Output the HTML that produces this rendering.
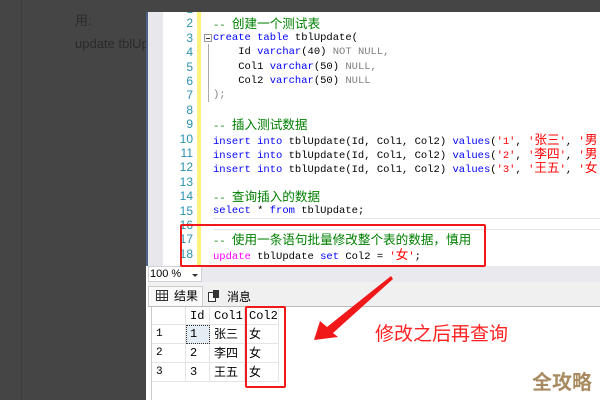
<!DOCTYPE html>
<html><head><meta charset="utf-8"><style>
*{margin:0;padding:0;box-sizing:border-box}
body{width:600px;height:400px;overflow:hidden;background:#454545;position:relative;font-family:"Liberation Mono","Noto Sans CJK SC",monospace}
.abs{position:absolute}
.code{position:absolute;left:213px;font-size:10.5px;line-height:14px;white-space:pre;color:#000}
.ln{position:absolute;left:163px;width:30px;text-align:right;font-size:12px;line-height:14px;color:#2b91af;font-family:"Liberation Sans",sans-serif}
.c{font-family:"Noto Sans CJK SC",sans-serif;font-size:12.6px;line-height:14px}
.g{color:#008000}.b{color:#0000ff}.r{color:#ff0000}.gr{color:#808080}.m{color:#ff00ff}
.cell{position:absolute;border-right:1px solid #e4e4e4;border-bottom:1px solid #e4e4e4;font-size:12px;line-height:18px;padding-left:4px;color:#000}
</style></head><body>
<div class="abs" style="left:21px;top:0;width:1px;height:400px;background:#3c3c3c"></div>
<div class="abs" style="left:75px;top:10px;color:#2a2a2a;font-size:13px;font-family:'Liberation Sans','Noto Sans CJK SC',sans-serif">用:</div>
<div class="abs" style="left:75px;top:36px;color:#2a2a2a;font-size:13px;font-family:'Liberation Sans',sans-serif">update tblUp</div>
<div class="abs" style="left:390px;top:-1px;color:#2a2a2a;font-size:10.5px;white-space:pre">Id varchar(40) NOT NULL,</div>
<div class="abs" style="left:284px;top:0;width:1px;height:12px;background:#555"></div>
<!-- screenshot panel -->
<div class="abs" style="left:146px;top:12px;width:454px;height:388px;background:#fff"></div>
<div class="abs" style="left:146px;top:12px;width:2px;height:254px;background:#4a5f8a"></div>
<div class="abs" style="left:148px;top:12px;width:15px;height:254px;background:#e8e8ec"></div>
<div class="abs" style="left:197px;top:12px;width:4px;height:254px;background:#fff27a"></div>
<div class="abs" style="left:208px;top:44px;width:1px;height:58px;background:#aaa"></div>
<div class="abs" style="left:204px;top:34px;width:8px;height:8px;border:1px solid #999;background:#fff"></div>
<div class="abs" style="left:206px;top:38px;width:4px;height:1px;background:#333"></div>
<div class="abs" style="left:213px;top:218px;width:387px;height:12px;border-top:1px solid #e4e4e8;border-bottom:1px solid #e4e4e8"></div>
<div class="ln" style="top:2px">1</div><div class="ln" style="top:16px">2</div><div class="ln" style="top:31px">3</div><div class="ln" style="top:45px">4</div><div class="ln" style="top:60px">5</div><div class="ln" style="top:74px">6</div><div class="ln" style="top:88px">7</div><div class="ln" style="top:103px">8</div><div class="ln" style="top:117px">9</div><div class="ln" style="top:132px">10</div><div class="ln" style="top:146px">11</div><div class="ln" style="top:160px">12</div><div class="ln" style="top:175px">13</div><div class="ln" style="top:189px">14</div><div class="ln" style="top:204px">15</div><div class="ln" style="top:218px">16</div><div class="ln" style="top:232px">17</div><div class="ln" style="top:247px">18</div>
<div class="abs" style="left:146px;top:0;width:454px;height:12px;background:#454545"></div>
<div class="code g" style="top:16px">-- <span class="c">创建一个测试表</span></div>
<div class="code" style="top:31px"><span class="b">create table</span> tblUpdate(</div>
<div class="code" style="top:45px">    Id <span class="b">varchar</span>(40) <span class="gr">NOT NULL,</span></div>
<div class="code" style="top:60px">    Col1 <span class="b">varchar</span>(50) <span class="gr">NULL,</span></div>
<div class="code" style="top:74px">    Col2 <span class="b">varchar</span>(50) <span class="gr">NULL</span></div>
<div class="code gr" style="top:88px">);</div>
<div class="code g" style="top:117px">-- <span class="c">插入测试数据</span></div>
<div class="code" style="top:132px"><span class="b">insert into</span> tblUpdate(Id, Col1, Col2) <span class="b">values</span>(<span class="r">'1'</span>, <span class="r">'<span class="c">张三</span>'</span>, <span class="r">'<span class="c">男</span>'</span></div>
<div class="code" style="top:146px"><span class="b">insert into</span> tblUpdate(Id, Col1, Col2) <span class="b">values</span>(<span class="r">'2'</span>, <span class="r">'<span class="c">李四</span>'</span>, <span class="r">'<span class="c">男</span>'</span></div>
<div class="code" style="top:160px"><span class="b">insert into</span> tblUpdate(Id, Col1, Col2) <span class="b">values</span>(<span class="r">'3'</span>, <span class="r">'<span class="c">王五</span>'</span>, <span class="r">'<span class="c">女</span>'</span></div>
<div class="code g" style="top:189px">-- <span class="c">查询插入的数据</span></div>
<div class="code" style="top:204px"><span class="b">select</span> * <span class="b">from</span> tblUpdate;</div>
<div class="code g" style="top:232px">-- <span class="c">使用一条语句批量修改整个表的数据，慎用</span></div>
<div class="code" style="top:247px"><span class="m">update</span> tblUpdate <span class="b">set</span> Col2 = <span class="r">'<span class="c">女</span>'</span>;</div>
<!-- zoom bar -->
<div class="abs" style="left:148px;top:266px;width:452px;height:16px;background:#e9e9ee"></div>
<div class="abs" style="left:148px;top:266px;width:54px;height:16px;background:#fff;border:1px solid #d0d0d8;font-size:11px;line-height:14px;padding-left:1px;font-family:'Liberation Sans',sans-serif">100 %<span style="position:absolute;right:3px;top:7px;border-left:3px solid transparent;border-right:3px solid transparent;border-top:3px solid #333"></span></div>
<div class="abs" style="left:148px;top:282px;width:452px;height:24px;background:#f0f0f0"></div>
<div class="abs" style="left:148px;top:286px;width:55px;height:20px;background:#fafafa;border:1px solid #ccc;border-bottom:none"></div>
<svg class="abs" style="left:156px;top:290px" width="12" height="11"><rect x="0.5" y="0.5" width="11" height="10" fill="#fff" stroke="#333"/><path d="M0 4H12M0 7.5H12M4 0V11M8 0V11" stroke="#333"/></svg>
<div class="abs" style="left:174px;top:287px;font-size:12px;font-family:'Noto Sans CJK SC',sans-serif">结果</div>
<svg class="abs" style="left:208px;top:290px" width="12" height="12"><rect x="0.5" y="2.5" width="7" height="9" fill="#fff" stroke="#333"/><rect x="5" y="0" width="6" height="8" fill="#333"/></svg>
<div class="abs" style="left:227px;top:288px;font-size:12px;font-family:'Noto Sans CJK SC',sans-serif">消息</div>
<div class="abs" style="left:148px;top:306px;width:452px;height:1px;background:#bbb"></div>
<div class="abs" style="left:151px;top:307px;width:1px;height:93px;background:#ccc"></div>
<!-- grid -->
<div class="cell" style="left:152px;top:307px;width:34px;height:18px"></div>
<div class="cell" style="left:186px;top:307px;width:24px;height:18px">Id</div>
<div class="cell" style="left:210px;top:307px;width:35px;height:18px">Col1</div>
<div class="cell" style="left:245px;top:307px;width:34px;height:18px">Col2</div>
<div class="cell" style="left:152px;top:325px;width:34px;height:19px;font-size:11px">1</div>
<div class="cell" style="left:186px;top:325px;width:24px;height:19px;background:#e4ecf4;outline:1px dotted #333;outline-offset:-1px">1</div>
<div class="cell c" style="left:210px;top:325px;width:35px;height:19px;line-height:18px">张三</div>
<div class="cell c" style="left:245px;top:325px;width:34px;height:19px;line-height:18px">女</div>
<div class="cell" style="left:152px;top:344px;width:34px;height:19px;font-size:11px">2</div>
<div class="cell" style="left:186px;top:344px;width:24px;height:19px">2</div>
<div class="cell c" style="left:210px;top:344px;width:35px;height:19px;line-height:18px">李四</div>
<div class="cell c" style="left:245px;top:344px;width:34px;height:19px;line-height:18px">女</div>
<div class="cell" style="left:152px;top:363px;width:34px;height:19px;font-size:11px">3</div>
<div class="cell" style="left:186px;top:363px;width:24px;height:19px">3</div>
<div class="cell c" style="left:210px;top:363px;width:35px;height:19px;line-height:18px">王五</div>
<div class="cell c" style="left:245px;top:363px;width:34px;height:19px;line-height:18px">女</div>
<!-- annotations -->
<div class="abs" style="left:180px;top:224px;width:306px;height:43px;border:2px solid #f01818;border-radius:2px"></div>
<div class="abs" style="left:245px;top:306px;width:41px;height:82px;border:2px solid #f01818;border-radius:2px"></div>
<svg class="abs" style="left:0;top:0" width="600" height="400"><polygon points="314,340 320,321 327,327 391,276 393,279 333,333 338,337" fill="#f01818"/></svg>
<div class="abs" style="left:375px;top:319px;color:#f22;font-size:19px;font-family:'Noto Sans CJK SC',sans-serif;letter-spacing:0px">修改之后再查询</div>
<div class="abs" style="left:532px;top:366px;color:#a88a60;font-size:20px;font-weight:bold;font-family:'Noto Sans CJK SC',sans-serif">全攻略</div>
</body></html>
